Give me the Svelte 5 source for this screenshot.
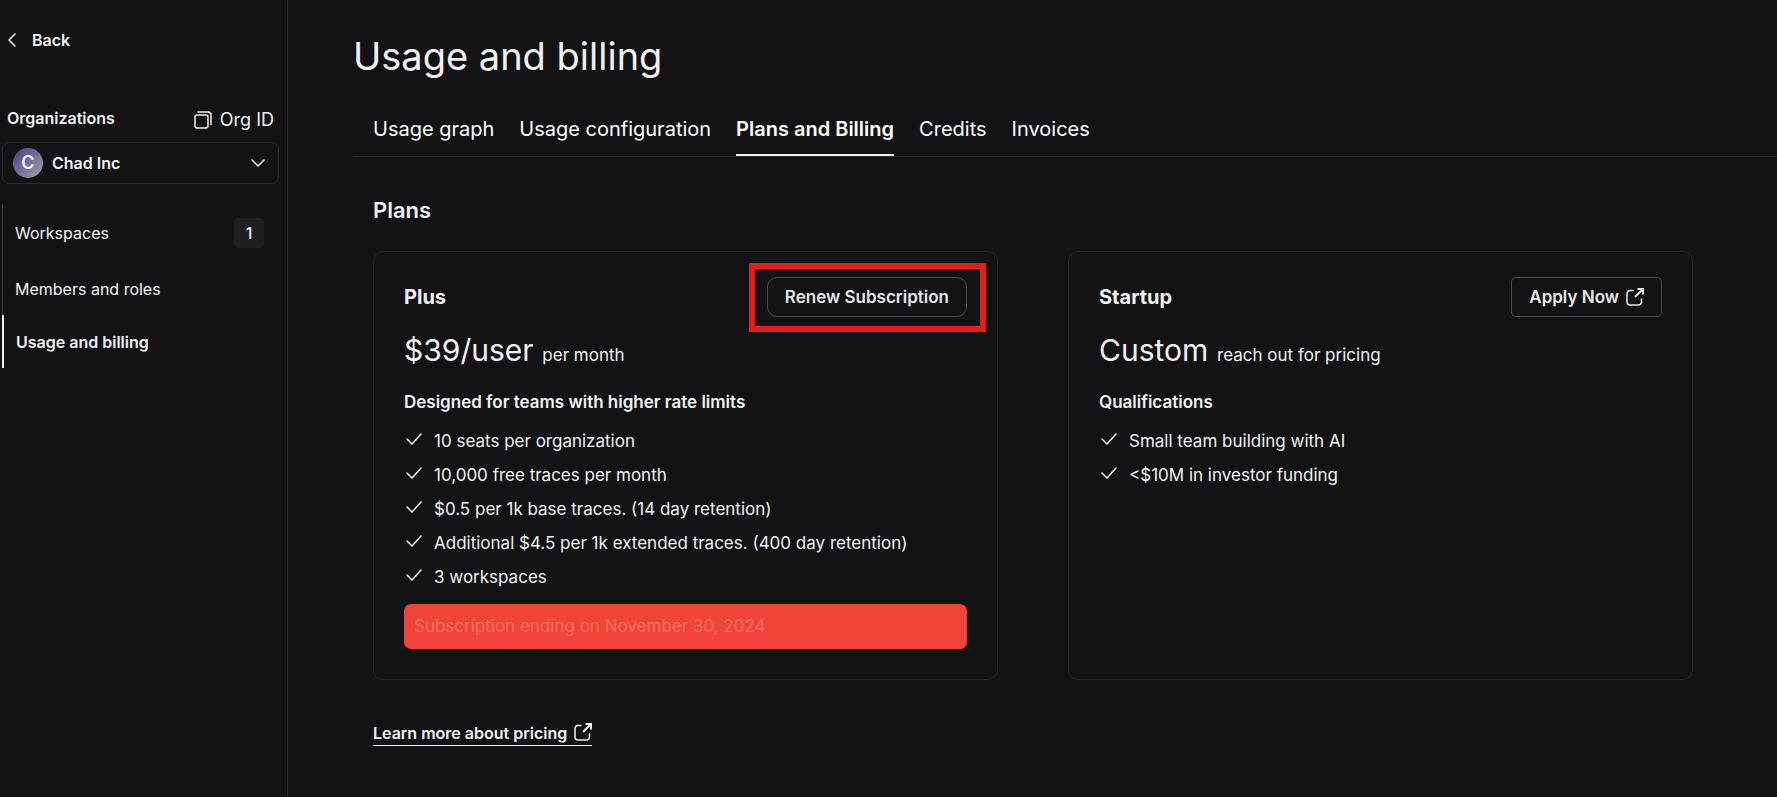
<script>
	const navItems = [
		{ id: 'workspaces', label: 'Workspaces', count: 1 },
		{ id: 'members', label: 'Members and roles' },
		{ id: 'billing', label: 'Usage and billing' }
	];

	const tabs = ['Usage graph', 'Usage configuration', 'Plans and Billing', 'Credits', 'Invoices'];

	const plans = [
		{
			id: 'plus',
			name: 'Plus',
			price: '$39/user',
			note: 'per month',
			subtitle: 'Designed for teams with higher rate limits',
			features: [
				'10 seats per organization',
				'10,000 free traces per month',
				'$0.5 per 1k base traces. (14 day retention)',
				'Additional $4.5 per 1k extended traces. (400 day retention)',
				'3 workspaces'
			],
			alert: 'Subscription ending on November 30, 2024'
		},
		{
			id: 'startup',
			name: 'Startup',
			price: 'Custom',
			note: 'reach out for pricing',
			subtitle: 'Qualifications',
			features: ['Small team building with AI', '<$10M in investor funding']
		}
	];

	let activeNav = $state('billing');
	let activeTab = $state('Plans and Billing');
	let organization = $state('Chad Inc');
</script>

{#snippet externalIcon()}
	<svg class="external" viewBox="0 0 18 18" aria-hidden="true">
		<path d="M7 2.500H4A3 3 0 0 0 1 5.500V14a3 3 0 0 0 3 3h8.500a3 3 0 0 0 3-3v-3" />
		<path class="arrow" d="M11.500 1H17v5.500M17 1L9 9" />
	</svg>
{/snippet}

<div class="layout">
	<aside class="sidebar">
		<a class="back" href="#back">
			<svg viewBox="0 0 8 14" aria-hidden="true"><path d="M7 1L1 7l6 6" /></svg>
			Back
		</a>

		<div class="org-header">
			<label for="organization">Organizations</label>
			<button type="button" class="org-id">
				<svg viewBox="0 0 18 18" aria-hidden="true">
					<rect x="1" y="4" width="13" height="13" rx="2" />
					<path d="M4 1h10a3 3 0 0 1 3 3v9.500" />
				</svg>
				Org ID
			</button>
		</div>

		<div class="org-select">
			<span class="avatar" aria-hidden="true">C</span>
			<select id="organization" bind:value={organization}>
				<option>Chad Inc</option>
			</select>
			<svg viewBox="0 0 14 8" aria-hidden="true"><path d="M1 1l6 6 6-6" /></svg>
		</div>

		<nav class="side-nav" aria-label="Organization">
			{#each navItems as item (item.id)}
				<a
					href="#{item.id}"
					class:active={activeNav === item.id}
					aria-current={activeNav === item.id ? 'page' : undefined}
					onclick={() => (activeNav = item.id)}
				>
					{item.label}
					{#if item.count}
						<span class="count">{item.count}</span>
					{/if}
				</a>
			{/each}
		</nav>
	</aside>

	<main>
		<h1>Usage and billing</h1>

		<div class="tabs" role="tablist">
			{#each tabs as tab}
				<button
					type="button"
					role="tab"
					class:active={activeTab === tab}
					aria-selected={activeTab === tab}
					onclick={() => (activeTab = tab)}
				>
					{tab}
				</button>
			{/each}
		</div>

		<section class="content">
			<h2>Plans</h2>

			<div class="plans">
				{#each plans as plan (plan.id)}
					<article class="card">
						<header>
							<h3>{plan.name}</h3>
							{#if plan.id === 'plus'}
								<div class="highlight">
									<button type="button" class="action renew">Renew Subscription</button>
								</div>
							{:else}
								<a class="action" href="#apply">Apply Now {@render externalIcon()}</a>
							{/if}
						</header>

						<p class="price"><span>{plan.price}</span> {plan.note}</p>
						<h4>{plan.subtitle}</h4>

						<ul>
							{#each plan.features as feature}
								<li>
									<svg viewBox="0 0 16 12" aria-hidden="true"><path d="M1 6l5 5 9-10" /></svg>
									{feature}
								</li>
							{/each}
						</ul>

						{#if plan.alert}
							<p class="alert">{plan.alert}</p>
						{/if}
					</article>
				{/each}
			</div>

			<a class="learn" href="#pricing">Learn more about pricing {@render externalIcon()}</a>
		</section>
	</main>
</div>

<style>
	:global(body) {
		background: #131315;
	}

	.layout {
		display: grid;
		grid-template-columns: 288px minmax(0, 1fr);
		min-height: 100vh;
		color: #f1f1f3;
		font-family: Inter, 'Liberation Sans', sans-serif;
		font-size: 17px;
		line-height: 24px;
	}

	.layout * {
		box-sizing: border-box;
	}

	h1,
	h2,
	h3,
	h4,
	p,
	ul {
		margin: 0;
		padding: 0;
	}

	button,
	select {
		padding: 0;
		border: 0;
		background: transparent;
		color: inherit;
		font: inherit;
		cursor: pointer;
	}

	a {
		color: inherit;
		text-decoration: none;
	}

	svg {
		flex: none;
		fill: none;
		stroke: currentColor;
		stroke-width: 1.5;
		stroke-linecap: round;
		stroke-linejoin: round;
	}

	.sidebar {
		padding: 28px 8px 0 0;
		border-right: 1px solid #29292c;
		font-size: 16px;
	}

	.back {
		display: flex;
		align-items: center;
		gap: 16px;
		padding-left: 8px;
		font-weight: 600;
	}

	.back svg {
		width: 8px;
		height: 14px;
	}

	.org-header {
		display: flex;
		align-items: flex-start;
		justify-content: space-between;
		padding: 0 5px 0 7px;
		margin-top: 54px;
		font-weight: 600;
	}

	.org-id {
		display: flex;
		align-items: center;
		gap: 8px;
		font-size: 18px;
		font-weight: 400;
		line-height: 28px;
	}

	.org-id svg {
		width: 18px;
		height: 18px;
	}

	.org-select {
		display: flex;
		align-items: center;
		gap: 9px;
		height: 42px;
		margin: 8px 0 0 2px;
		padding: 0 13px 0 10px;
		border: 1px solid #29292c;
		border-radius: 7px;
	}

	.org-select svg {
		width: 14px;
		height: 8px;
	}

	.avatar {
		width: 30px;
		border-radius: 50%;
		background: linear-gradient(135deg, #463c8c, #a5a5a8);
		font-size: 18px;
		font-weight: 600;
		line-height: 30px;
		text-align: center;
	}

	.org-select select {
		flex: 1;
		appearance: none;
		outline: 0;
		font-weight: 600;
	}

	.side-nav {
		display: flex;
		flex-direction: column;
		margin: 20px 0 0 2px;
	}

	.side-nav a {
		display: flex;
		align-items: center;
		justify-content: space-between;
		min-height: 53px;
		padding: 14px 15px 14px 12px;
		border-left: 1px solid #3f3f43;
	}

	.side-nav a.active {
		border-left: 2px solid #f1f1f3;
		font-weight: 600;
	}

	.count {
		width: 30px;
		border-radius: 4px;
		background: #202023;
		font-weight: 500;
		line-height: 30px;
		text-align: center;
	}

	main {
		padding: 32px 0 40px 65px;
	}

	h1 {
		font-size: 38px;
		font-weight: 400;
		line-height: 48px;
	}

	.tabs {
		display: flex;
		gap: 25px;
		margin-top: 35px;
		padding-left: 20px;
		border-bottom: 1px solid #29292c;
	}

	.tabs button {
		padding: 0 0 11px;
		border-bottom: 2px solid transparent;
		color: #fff;
		font-size: 20px;
		line-height: 28px;
	}

	.tabs button.active {
		border-color: #f1f1f3;
		font-weight: 600;
	}

	.content {
		padding: 38px 84px 0 20px;
	}

	h2 {
		font-size: 22px;
		font-weight: 600;
		line-height: 30px;
	}

	.plans {
		display: grid;
		grid-template-columns: 1fr 1fr;
		gap: 70px;
		margin-top: 26px;
	}

	.card {
		padding: 25px 30px 30px;
		border: 1px solid #262629;
		border-radius: 10px;
	}

	.card header {
		display: flex;
		align-items: center;
		justify-content: space-between;
	}

	h3 {
		font-size: 20px;
		font-weight: 700;
	}

	.action {
		display: flex;
		align-items: center;
		gap: 7px;
		height: 40px;
		padding: 0 17px;
		border: 1px solid #4a4a4f;
		border-radius: 5px;
		color: #e6e6ea;
		font-weight: 600;
	}

	.renew {
		border-radius: 10px;
	}

	.highlight {
		position: relative;
	}

	.highlight::after {
		content: '';
		position: absolute;
		inset: -14px -19px -15px -18px;
		border: 6px solid #e71c1c;
		pointer-events: none;
	}

	.external {
		width: 18px;
		height: 18px;
	}

	.arrow {
		stroke-width: 2;
		stroke-linecap: butt;
		stroke-linejoin: miter;
	}

	.price {
		margin-top: 13px;
		line-height: 40px;
	}

	.price span {
		margin-right: 4px;
		font-size: 30px;
	}

	h4 {
		margin-top: 15px;
		font-size: 17px;
		font-weight: 600;
	}

	ul {
		margin-top: 10px;
		list-style: none;
	}

	li {
		display: flex;
		align-items: center;
		gap: 12px;
		padding: 5px 0 5px 2px;
	}

	li svg {
		width: 16px;
		height: 12px;
		margin-bottom: 4px;
	}

	.alert {
		margin-top: 10px;
		padding: 0 10px;
		border-radius: 7px;
		background: #f04438;
		color: #f97066;
		line-height: 45px;
	}

	.learn {
		display: inline-flex;
		align-items: center;
		gap: 7px;
		margin-top: 41px;
		border-bottom: 1px solid #f1f1f3;
		font-size: 16px;
		font-weight: 600;
	}

	.learn .external {
		margin-bottom: 3px;
	}
</style>
